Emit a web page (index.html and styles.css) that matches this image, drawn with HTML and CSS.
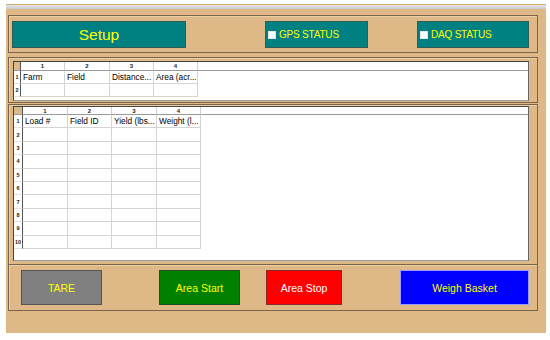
FILE: index.html
```html
<!DOCTYPE html>
<html>

<head>
    <title>
        Yield Monitor
    </title>
    <link rel="stylesheet" href="styles.css">
</head>

<body>
    <div class="window">
        <div class="titlebar"></div>
        <div class="content">
            <div class="panel panel-top">
                <button class="btn btn-setup">Setup</button>
                <div class="status status-gps"><span class="led"></span>GPS STATUS</div>
                <div class="status status-daq"><span class="led"></span>DAQ STATUS</div>
            </div>

            <div class="panel panel-fields">
                <div class="sheet sheet-fields" id="fieldSheet">
                    <div class="corner"></div>
                    <div class="ch">1</div>
                    <div class="ch">2</div>
                    <div class="ch">3</div>
                    <div class="ch">4</div>
                    <div class="ch-fill"></div>
                    <div class="rh">1</div>
                    <div class="cell">Farm</div>
                    <div class="cell">Field</div>
                    <div class="cell">Distance...</div>
                    <div class="cell">Area (acr...</div>
                </div>
            </div>

            <div class="panel panel-loads">
                <div class="sheet sheet-loads" id="loadSheet">
                    <div class="corner"></div>
                    <div class="ch">1</div>
                    <div class="ch">2</div>
                    <div class="ch">3</div>
                    <div class="ch">4</div>
                    <div class="ch-fill"></div>
                    <div class="rh">1</div>
                    <div class="cell">Load #</div>
                    <div class="cell">Field ID</div>
                    <div class="cell">Yield (lbs...</div>
                    <div class="cell">Weight (l...</div>
                </div>
            </div>

            <div class="panel panel-buttons">
                <button class="btn btn-tare">TARE</button>
                <button class="btn btn-start">Area Start</button>
                <button class="btn btn-stop">Area Stop</button>
                <button class="btn btn-weigh">Weigh Basket</button>
            </div>
        </div>
    </div>

    <script>
        // fill the empty rows of both sheets
        function addRows(sheet, from, to) {
            for (let i = from; i <= to; i++) {
                const rh = document.createElement("div");
                rh.className = "rh";
                rh.textContent = i;
                sheet.appendChild(rh);
                for (let c = 0; c < 4; c++) {
                    const cell = document.createElement("div");
                    cell.className = "cell";
                    sheet.appendChild(cell);
                }
            }
        }

        addRows(document.getElementById("fieldSheet"), 2, 2);
        addRows(document.getElementById("loadSheet"), 2, 10);
    </script>
</body>

</html>
```

FILE: styles.css
```css
body {
    margin: 0;
    background-color: #fff;
    font-family: 'Liberation Sans', Arial, sans-serif;
}

.window {
    margin: 4px 0 0 6px;
    width: 540px;
    height: 329px;
    background-color: #deb887;
    border-top: 1px solid #d6aa74;
    box-sizing: border-box;
}

.titlebar {
    height: 4px;
    background: linear-gradient(#e6e6e6, #c9c9c9);
}

.content {
    padding: 6px 8px 0 2px;
}

.panel {
    border: 1px solid #7a654c;
    box-sizing: border-box;
    box-shadow: inset 1px 1px 0 #edcfa4;
}

.panel-top {
    display: flex;
    height: 38px;
    padding: 5px 0 0 3px;
}

.panel-fields {
    margin-top: 4px;
    height: 46px;
    padding: 3px 0 0 4px;
}

.panel-loads {
    margin-top: 1px;
    height: 160px;
    padding: 1px 0 0 4px;
    border-bottom: none;
}

.panel-buttons {
    display: flex;
    height: 47px;
    padding: 5px 0 0 12px;
}

/* buttons */
.btn {
    height: 35px;
    padding: 0;
    font-family: 'Liberation Sans', Arial, sans-serif;
    font-size: 10.5px;
    color: #ffff00;
    border: 1px solid #555;
    box-sizing: border-box;
    cursor: pointer;
}

.btn-setup {
    width: 174px;
    height: 27px;
    font-size: 15.5px;
    background-color: #008080;
    border-color: #2f5c55;
}

.status {
    display: flex;
    align-items: center;
    height: 27px;
    box-sizing: border-box;
    background-color: #008080;
    border: 1px solid #2f5c55;
    color: #ffff00;
    font-size: 10px;
    letter-spacing: -0.2px;
}

.status-gps {
    width: 103px;
    margin-left: 79px;
}

.status-daq {
    width: 112px;
    margin-left: 49px;
}

.led {
    width: 6px;
    height: 6px;
    margin: 0 3px 0 2px;
    background-color: #fff;
    border: 1px solid #e4e4e4;
}

.btn-tare {
    width: 81px;
    background-color: #808080;
}

.btn-start {
    width: 81px;
    margin-left: 57px;
    background-color: #008000;
    border-color: #1f4f1f;
}

.btn-stop {
    width: 76px;
    margin-left: 26px;
    background-color: #ff0000;
    border-color: #8a2a2a;
    color: #fff;
}

.btn-weigh {
    width: 129px;
    margin-left: 58px;
    background-color: #0000ff;
    border-color: #9a9aff;
}

/* sheets */
.sheet {
    display: grid;
    align-content: start;
    width: 516px;
    background-color: #fff;
    border: 1px solid #444;
    border-bottom-color: #9a9a9a;
    border-right-color: #666;
    box-sizing: border-box;
}

.sheet-fields {
    height: 40px;
    grid-template-columns: 7px 44px 45px 44px 44px 1fr;
    grid-template-rows: 9px;
    grid-auto-rows: 13px;
}

.sheet-loads {
    height: 155px;
    grid-template-columns: 9px 45px 44px 45px 44px 1fr;
    grid-template-rows: 8px;
    grid-auto-rows: 13.4px;
}

.corner {
    background-color: #d9b98c;
    border-right: 1px solid #555;
    border-bottom: 1px solid #999;
}

.ch {
    font-size: 6px;
    font-weight: bold;
    text-align: center;
    line-height: 8px;
    color: #222;
    border-right: 1px solid #cfcfcf;
    border-bottom: 1px solid #999;
    overflow: hidden;
}

.ch-fill {
    border-bottom: 1px solid #999;
}

.rh {
    grid-column: 1;
    display: flex;
    align-items: center;
    justify-content: center;
    font-size: 5.5px;
    font-weight: bold;
    color: #222;
    border-right: 1px solid #555;
    border-bottom: 1px solid #e2e2e2;
    overflow: hidden;
    white-space: nowrap;
}

.cell {
    display: flex;
    align-items: center;
    padding-left: 2px;
    font-size: 8.3px;
    color: #000;
    border-right: 1px solid #d4d4d4;
    border-bottom: 1px solid #d4d4d4;
    overflow: hidden;
    white-space: nowrap;
}
```
